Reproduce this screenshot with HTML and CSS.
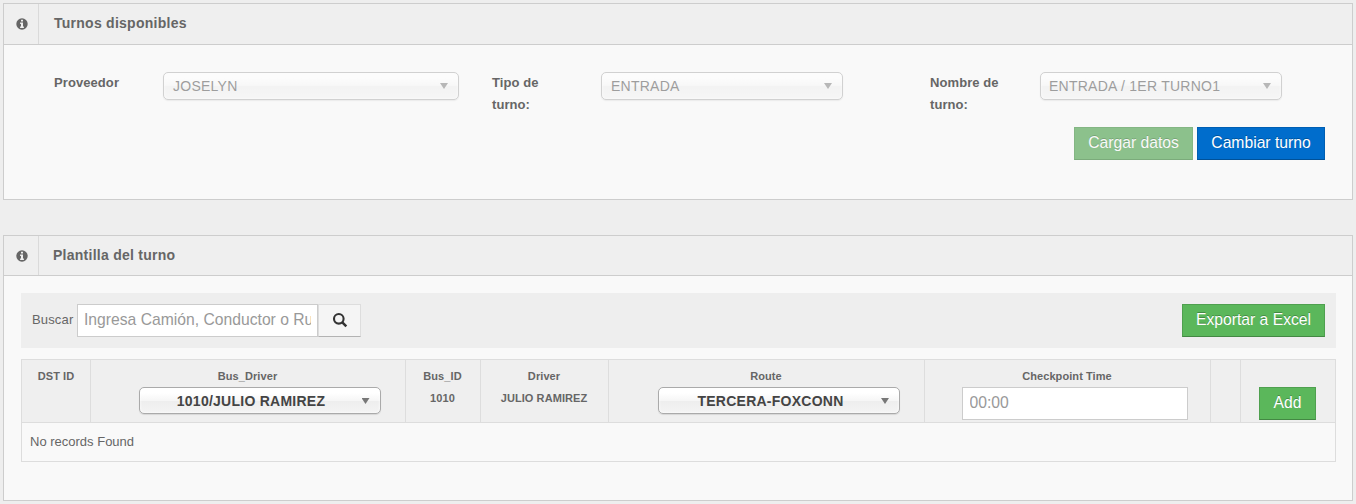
FILE: index.html
```html
<!DOCTYPE html>
<html lang="es">
<head>
<meta charset="utf-8">
<title>Turnos disponibles</title>
<link rel="stylesheet" href="styles.css">
</head>
<body>
<section class="panel shifts">
  <header class="panel-head">
    <span class="panel-icon"><svg width="12" height="12" viewBox="0 0 12 12"><path fill="#666" fill-rule="evenodd" d="M6 .3a5.7 5.7 0 1 0 0 11.4A5.7 5.7 0 0 0 6 .3zM5 1.8h2v1.7H5zM4.1 4.6H7v3.9h.9V10H4.1V8.500H5V6h-.9z"/></svg></span>
    <h2 class="title">Turnos disponibles</h2>
  </header>
  <div class="shift-form">
    <div class="fields">
      <label class="label">Proveedor</label>
      <div class="select disabled wide"><span class="value">JOSELYN</span><i class="arrow"></i></div>
      <label class="label">Tipo de turno:</label>
      <div class="select disabled"><span class="value">ENTRADA</span><i class="arrow"></i></div>
      <label class="label">Nombre de turno:</label>
      <div class="select disabled shift-name"><span class="value">ENTRADA / 1ER TURNO1</span><i class="arrow"></i></div>
    </div>
    <div class="actions">
      <button class="btn faded load">Cargar datos</button>
      <button class="btn primary change">Cambiar turno</button>
    </div>
  </div>
</section>

<section class="panel template">
  <header class="panel-head">
    <span class="panel-icon"><svg width="12" height="12" viewBox="0 0 12 12"><path fill="#666" fill-rule="evenodd" d="M6 .3a5.7 5.7 0 1 0 0 11.4A5.7 5.7 0 0 0 6 .3zM5 1.8h2v1.7H5zM4.1 4.6H7v3.9h.9V10H4.1V8.500H5V6h-.9z"/></svg></span>
    <h2 class="title">Plantilla del turno</h2>
  </header>
  <div class="template-body">
    <div class="toolbar">
      <label class="search-label">Buscar</label>
      <input class="input search-input" placeholder="Ingresa Camión, Conductor o Ru">
      <button class="search-btn"><svg width="16" height="16" viewBox="0 0 16 16" fill="none" stroke="#333" stroke-width="2.100"><circle cx="6.800" cy="6.800" r="4.800"/><path d="M10.300 10.300l4 4" stroke-width="2.500"/></svg></button>
      <button class="btn success export">Exportar a Excel</button>
    </div>
    <div class="grid">
      <div class="cell id-cell"><span class="col-name">DST ID</span></div>
      <div class="cell"><span class="col-name">Bus_Driver</span>
        <div class="select bold"><span class="value">1010/JULIO RAMIREZ</span><i class="arrow"></i></div></div>
      <div class="cell"><span class="col-name">Bus_ID</span><span class="col-name">1010</span></div>
      <div class="cell"><span class="col-name">Driver</span><span class="col-name">JULIO RAMIREZ</span></div>
      <div class="cell"><span class="col-name">Route</span>
        <div class="select bold route"><span class="value">TERCERA-FOXCONN</span><i class="arrow"></i></div></div>
      <div class="cell"><span class="col-name">Checkpoint Time</span><input class="input time-input" placeholder="00:00"></div>
      <div class="cell"></div>
      <div class="cell"><span class="col-name">&nbsp;</span><button class="btn success add">Add</button></div>
      <div class="empty-row">No records Found</div>
    </div>
  </div>
</section>
</body>
</html>
```
FILE: styles.css
```css
* { box-sizing: border-box; }
body {
  margin: 0;
  padding: 3px 3px 0;
  height: 504px;
  overflow: hidden;
  background: #eee;
  color: #666;
  font: 13px/22px "Liberation Sans", Arial, sans-serif;
}
.panel {
  width: 1350px;
  border: 1px solid #cdcdcd;
  background: #f9f9f9;
}
.shifts { height: 197px; margin-bottom: 35px; }
.template { height: 266px; }
.panel-head {
  display: flex;
  height: 41px;
  background: #efefef;
  border-bottom: 1px solid #cdcdcd;
}
.template .panel-head { height: 40px; }
.panel-icon {
  width: 35px;
  padding: 14px 0 0 11.500px;
  border-right: 1px solid #dadada;
  line-height: 0;
}
.title {
  margin: 0;
  padding: 8px 0 0 15px;
  font-size: 14px;
  line-height: 22px;
  letter-spacing: .26px;
}
.template .title { padding-left: 14px; }

.shift-form { padding: 27px 27px 0 50px; }
.fields {
  display: grid;
  grid-template-columns: 109px 329px 109px 329px 110px 242px;
  height: 55px;
}
.label { width: 80px; font-weight: bold; letter-spacing: .08px; }
.actions { display: flex; justify-content: flex-end; gap: 4px; }

.select {
  display: flex;
  justify-content: space-between;
  width: 242px;
  height: 28px;
  padding: 0 10px 0 9px;
  border: 1px solid #aaa;
  border-radius: 5px;
  background: linear-gradient(#fff 20%, #f6f6f6 50%, #eee 52%, #f4f4f4 100%);
  box-shadow: 0 0 3px #fff inset, 0 1px 1px rgba(0, 0, 0, .1);
  color: #444;
  font-size: 14px;
  line-height: 26px;
  letter-spacing: .25px;
  white-space: nowrap;
}
.wide { width: 296px; }
.disabled { opacity: .5; }
.shift-name { padding-left: 8px; }
.bold { height: 27px; font-weight: bold; }
.bold .value { flex: 1; text-align: center; padding-right: 8px; }
.cell .select { margin-left: 24px; }
.cell .route { margin-left: 26px; }
.arrow {
  width: 8px;
  height: 6px;
  margin-top: 10px;
  background: #777;
  clip-path: polygon(0 0, 100% 0, 50% 100%);
}

.btn {
  height: 33px;
  padding: 0 0 2px;
  border: 1px solid;
  border-color: rgba(0, 0, 0, .12) rgba(0, 0, 0, .12) rgba(0, 0, 0, .25);
  color: #fff;
  font: 15.700px/29px "Liberation Sans", Arial, sans-serif;
  text-shadow: 0 -1px 0 rgba(0, 0, 0, .25);
}
.success { background: #5bb75b; }
.primary { background: #006dcc; }
.faded {
  background: #8cc18c;
  border-color: #84b684 #84b684 #7bab7b;
  color: #f9f9f9;
  text-shadow: 0 -1px 0 rgba(0, 0, 0, .16);
}
.load { width: 119px; }
.change { width: 128px; }
.export { width: 143px; margin-left: auto; }
.add { width: 57px; }

.template-body { padding: 17px 16px 0 17px; }
.toolbar {
  display: flex;
  height: 55px;
  padding: 11px 11px 0;
  margin-bottom: 11px;
  background: #eee;
}
.search-label { width: 45px; padding-top: 5px; letter-spacing: .15px; }
.input {
  height: 33px;
  padding: 0 6px 2px;
  border: 1px solid #ccc;
  border-radius: 0;
  background: #fff;
  font: 15.700px "Liberation Sans", Arial, sans-serif;
}
.input::placeholder { color: #999; opacity: 1; }
.search-input { width: 241px; }
.search-btn {
  width: 43px;
  height: 33px;
  padding: 0 0 1px;
  border: 1px solid #ddd;
  border-bottom-color: #b3b3b3;
  background: #f5f5f5;
  line-height: 0;
}

.grid {
  display: grid;
  grid-template-columns: 69px 315px 75px 128px 316px 286px 30px 95px;
  grid-template-rows: 63px 39px;
  width: 1315px;
  border: 1px solid #ddd;
  border-width: 1px 0 0 1px;
}
.cell {
  display: flex;
  flex-direction: column;
  align-items: center;
  padding: 5px 1px 0 0;
  border-right: 1px solid #ddd;
  border-bottom: 1px solid #ddd;
  background: #efefef;
}
.id-cell { padding-right: 0; }
.col-name { font-size: 11px; font-weight: bold; letter-spacing: .08px; }
.time-input { width: 226px; margin-left: 15px; padding-left: 7px; }
.empty-row {
  grid-column: 1 / -1;
  padding: 8px;
  border-right: 1px solid #ddd;
  border-bottom: 1px solid #ddd;
}
```
